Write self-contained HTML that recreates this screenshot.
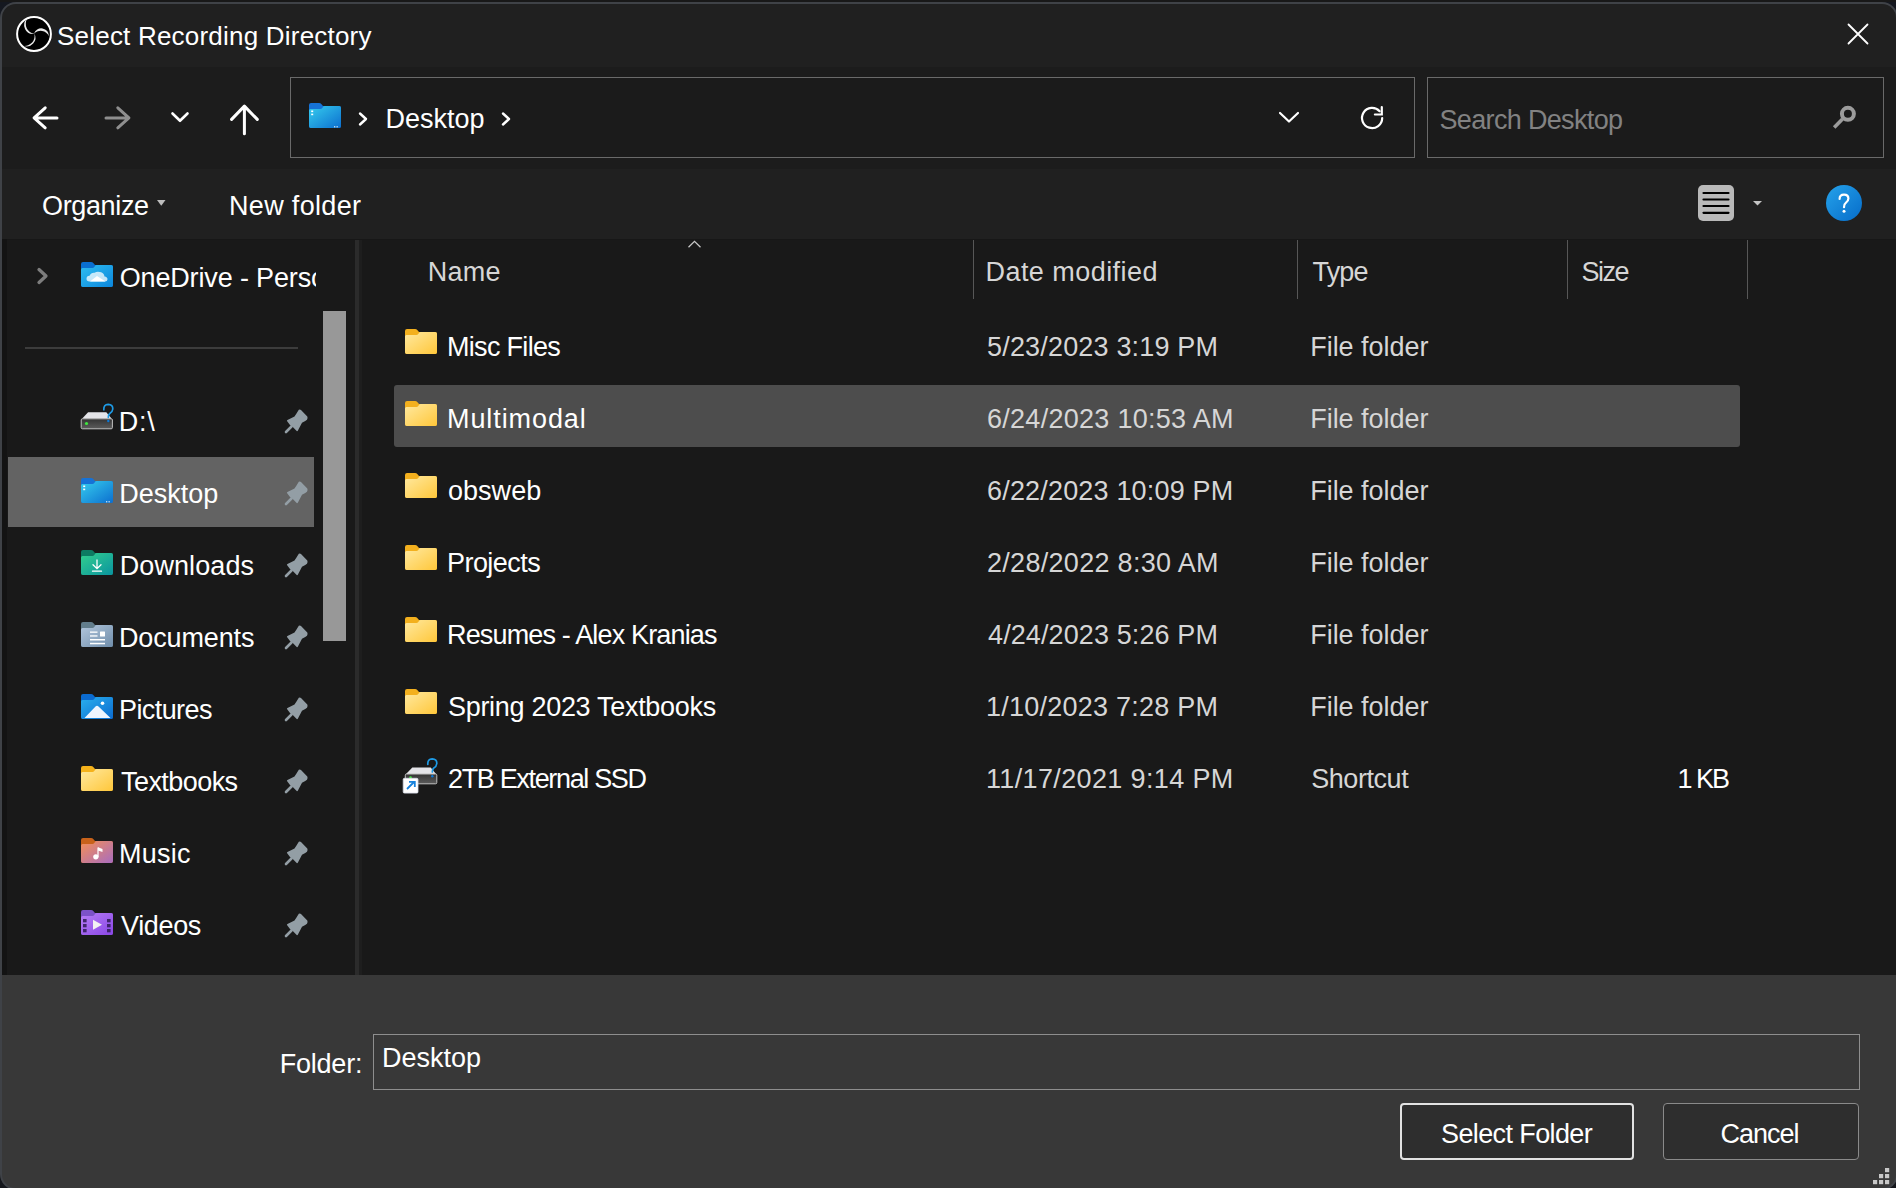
<!DOCTYPE html>
<html><head><meta charset="utf-8">
<style>
*{margin:0;padding:0;box-sizing:border-box}
html,body{width:1896px;height:1188px;overflow:hidden;background:#181818}
body{font-family:"Liberation Sans",sans-serif;position:relative}
.win{position:absolute;left:0;top:2px;width:1898px;height:1188px;border-radius:16px;background:#3f4247}
.clip{position:absolute;left:2px;top:4px;width:1894px;height:1184px;border-radius:14px;overflow:hidden}
.stage{position:absolute;left:-2px;top:-4px;width:1898px;height:1188px}
.abs{position:absolute}
.t{position:absolute;white-space:nowrap;line-height:1;font-family:"Liberation Sans",sans-serif}
svg{position:absolute;overflow:visible}
</style></head><body>
<div class="abs" style="left:0;top:2px;width:20px;height:20px;background:#151820"></div><div class="abs" style="left:1876px;top:2px;width:20px;height:20px;background:#151820"></div><div class="abs" style="left:0;top:1168px;width:20px;height:20px;background:#14161b"></div><div class="abs" style="left:1876px;top:1168px;width:20px;height:20px;background:#14161b"></div>
<div class="win"></div>
<div class="clip"><div class="stage">
<!-- title bar -->
<div class="abs" style="left:2px;top:4px;width:1896px;height:63px;background:#202020"></div>
<!-- nav bar -->
<div class="abs" style="left:2px;top:67px;width:1896px;height:102px;background:#1c1c1c"></div>
<!-- toolbar -->
<div class="abs" style="left:2px;top:169px;width:1896px;height:70px;background:#202020"></div>
<!-- content -->
<div class="abs" style="left:2px;top:239px;width:1896px;height:736px;background:#191919"></div>
<!-- footer -->
<div class="abs" style="left:2px;top:975px;width:1896px;height:220px;background:#383838"></div>

<!-- address box -->
<div class="abs" style="left:290px;top:77px;width:1125px;height:81px;border:1px solid #6a6a6a;background:#1b1b1b"></div>
<!-- search box -->
<div class="abs" style="left:1427px;top:77px;width:457px;height:81px;border:1px solid #6a6a6a;background:#1b1b1b"></div>

<div class="abs" style="left:2px;top:239px;width:5px;height:736px;background:#131313"></div>
<div class="abs" style="left:7px;top:239px;width:1887px;height:1px;background:#171717"></div>
<!-- left pane separator & splitter -->
<div class="abs" style="left:25px;top:347px;width:273px;height:2px;background:#3c3c3c"></div>
<div class="abs" style="left:323px;top:311px;width:23px;height:330px;background:#989898"></div>
<div class="abs" style="left:355px;top:240px;width:4px;height:735px;background:#2b2b2b"></div>
<div class="abs" style="left:359px;top:240px;width:3px;height:735px;background:#1e1e1e"></div>

<!-- nav selection -->
<div class="abs" style="left:8px;top:457px;width:306px;height:70px;background:#636363"></div>
<!-- list selection -->
<div class="abs" style="left:394px;top:385px;width:1346px;height:62px;background:#4d4d4d;border-radius:3px"></div>

<!-- column dividers -->
<div class="abs" style="left:973px;top:240px;width:1px;height:59px;background:#575757"></div>
<div class="abs" style="left:1297px;top:240px;width:1px;height:59px;background:#575757"></div>
<div class="abs" style="left:1567px;top:240px;width:1px;height:59px;background:#575757"></div>
<div class="abs" style="left:1747px;top:240px;width:1px;height:59px;background:#575757"></div>

<!-- footer input & buttons -->
<div class="abs" style="left:373px;top:1034px;width:1487px;height:56px;border:1px solid #8e8e8e;background:#383838"></div>
<div class="abs" style="left:1400px;top:1103px;width:234px;height:57px;border:2px solid #e2e2e2;border-radius:4px;background:#2e2e2e"></div>
<div class="abs" style="left:1663px;top:1103px;width:196px;height:57px;border:1px solid #8a8a8a;border-radius:4px;background:#2e2e2e"></div>

<svg style="left:16px;top:16px" width="36" height="36" viewBox="0 0 36 36"><circle cx="18" cy="18" r="17" fill="#000"/>
<g fill="#e8e8e8">
<path d="M11.3,2.6 A8.7,8.7 0 0 0 18.4,17.8 A10,10 0 0 1 11.3,2.6 Z"/>
<path d="M18,17.8 A7.6,7.6 0 0 1 32.9,20.2 A9,9 0 0 0 18,17.8 Z"/>
<path d="M18.3,17.4 A8.8,8.8 0 0 1 7.3,29.8 A10,10 0 0 0 18.3,17.4 Z"/>
</g>
<circle cx="18" cy="18" r="16.9" fill="none" stroke="#fff" stroke-width="2"/></svg>
<svg style="left:1846px;top:22px" width="24" height="24" viewBox="0 0 24 24"><path d="M2.5,2.5 L21.5,21.5 M21.5,2.5 L2.5,21.5" stroke="#fff" stroke-width="1.8" stroke-linecap="round"/></svg>
<svg style="left:26px;top:98px" width="40" height="40" viewBox="0 0 40 40"><path d="M19.2,9.8 L8.1,19.9 L19.2,29.8 M8.6,19.9 L31,19.9" fill="none" stroke="#fff" stroke-width="3" stroke-linecap="round" stroke-linejoin="round"/></svg>
<svg style="left:97px;top:98px" width="40" height="40" viewBox="0 0 40 40"><path d="M20.8,9.8 L31.9,19.9 L20.8,29.8 M31.4,19.9 L9,19.9" fill="none" stroke="#8e8e8e" stroke-width="3" stroke-linecap="round" stroke-linejoin="round"/></svg>
<svg style="left:166px;top:104px" width="28" height="28" viewBox="0 0 28 28"><path d="M6.5,9.5 L14,16.8 L21.5,9.5" fill="none" stroke="#fff" stroke-width="2.6" stroke-linecap="round" stroke-linejoin="round"/></svg>
<svg style="left:224px;top:98px" width="40" height="40" viewBox="0 0 40 40"><path d="M7.6,21.4 L20.4,8.1 L33.3,21.4 M20.4,9 L20.4,35.7" fill="none" stroke="#fff" stroke-width="3" stroke-linecap="round" stroke-linejoin="round"/></svg>
<svg style="left:309px;top:103px" width="32" height="25" viewBox="0 0 32 25"><defs><linearGradient id="gd1" x1="0" y1="0" x2="1" y2="1"><stop offset="0" stop-color="#36cdee"/><stop offset="1" stop-color="#0c6fcf"/></linearGradient></defs>
<path d="M2,0 H10 Q11.5,0 12.5,1.3 L14,3 H30 Q32,3 32,5 V23 Q32,25 30,25 H2 Q0,25 0,23 V2 Q0,0 2,0 Z" fill="#1672d6"/>
<path d="M0,7.5 Q0,6 1.5,6 H11.5 Q12.5,6 13.3,5 L14.5,3.3 Q15,3 15.8,3 H30 Q32,3 32,5 V23 Q32,25 30,25 H2 Q0,25 0,23 Z" fill="url(#gd1)"/><rect x="2.2" y="7.5" width="2" height="1.6" fill="#fff"/><rect x="2.2" y="10.6" width="2" height="1.6" fill="#fff"/><rect x="25" y="23.3" width="1.3" height="1" fill="#fff"/><rect x="27.5" y="23.3" width="1.3" height="1" fill="#fff"/></svg>
<svg style="left:355px;top:109px" width="16" height="20" viewBox="0 0 16 20"><path d="M5,4.5 L11,10 L5,15.5" fill="none" stroke="#fff" stroke-width="2.4" stroke-linecap="round" stroke-linejoin="round"/></svg>
<svg style="left:498px;top:109px" width="16" height="20" viewBox="0 0 16 20"><path d="M5,4.5 L11,10 L5,15.5" fill="none" stroke="#fff" stroke-width="2.4" stroke-linecap="round" stroke-linejoin="round"/></svg>
<svg style="left:1275px;top:106px" width="28" height="24" viewBox="0 0 28 24"><path d="M5,7 L14,15.5 L23,7" fill="none" stroke="#fff" stroke-width="2.2" stroke-linecap="round" stroke-linejoin="round"/></svg>
<svg style="left:1352px;top:98px" width="40" height="40" viewBox="0 0 40 40"><path d="M30.2,20 A10.1,10.1 0 1 1 27.6,13.2" fill="none" stroke="#fff" stroke-width="2.2" stroke-linecap="round"/><path d="M29.8,9 L29.8,16.5 L22.9,16.5" fill="none" stroke="#fff" stroke-width="2.2" stroke-linecap="round" stroke-linejoin="miter"/></svg>
<svg style="left:1824px;top:98px" width="40" height="40" viewBox="0 0 40 40"><circle cx="23.9" cy="15.8" r="6" fill="none" stroke="#9c9c9c" stroke-width="4"/><path d="M18.5,21 L10.2,29.5" stroke="#9c9c9c" stroke-width="3.6"/></svg>
<svg style="left:155px;top:198px" width="13" height="10" viewBox="0 0 13 10"><path d="M2,2 L10.5,2 L6.25,7.7 Z" fill="#bdbdbd"/></svg>
<svg style="left:1698px;top:185px" width="36" height="36" viewBox="0 0 36 36"><rect x="0" y="0" width="36" height="36" rx="5" fill="#b9b9b9"/><g stroke="#000" stroke-width="2.2" stroke-linecap="round"><path d="M5.5,8 H30.5 M5.5,14.5 H30.5 M5.5,21 H30.5 M5.5,27.8 H30.5"/></g></svg>
<svg style="left:1751px;top:199px" width="13" height="9" viewBox="0 0 13 9"><path d="M2,1.9 L11,1.9 L6.5,6.6 Z" fill="#c4c4c4"/></svg>
<svg style="left:1826px;top:185px" width="36" height="36" viewBox="0 0 36 36"><defs><linearGradient id="hg" x1="0" y1="0" x2="1" y2="1"><stop offset="0" stop-color="#25a2ea"/><stop offset="1" stop-color="#066cc9"/></linearGradient></defs><circle cx="18" cy="18" r="18" fill="url(#hg)"/><path d="M13.6,14 Q13.6,9.6 18,9.6 Q22.4,9.6 22.4,13.6 Q22.4,16.2 19.8,17.9 Q18,19.2 18,22.2" fill="none" stroke="#fff" stroke-width="2.2" stroke-linecap="round"/><circle cx="18" cy="26.3" r="1.5" fill="#fff"/></svg>
<svg style="left:33px;top:264px" width="20" height="24" viewBox="0 0 20 24"><path d="M6,5.5 L13,12 L6,18.5" fill="none" stroke="#7d7d7d" stroke-width="3.3" stroke-linecap="round" stroke-linejoin="round"/></svg>
<svg style="left:684px;top:238px" width="22" height="14" viewBox="0 0 22 14"><path d="M4.5,9.3 L10.5,3.3 L16.5,9.3" fill="none" stroke="#c8c8c8" stroke-width="1.3"/></svg>
<svg style="left:81px;top:262px" width="32" height="25" viewBox="0 0 32 25"><defs><linearGradient id="god" x1="0" y1="0" x2="1" y2="1"><stop offset="0" stop-color="#2fbdf0"/><stop offset="1" stop-color="#0b86dc"/></linearGradient></defs>
<path d="M2,0 H10 Q11.5,0 12.5,1.3 L14,3 H30 Q32,3 32,5 V23 Q32,25 30,25 H2 Q0,25 0,23 V2 Q0,0 2,0 Z" fill="#0a6fd1"/>
<path d="M0,7.5 Q0,6 1.5,6 H11.5 Q12.5,6 13.3,5 L14.5,3.3 Q15,3 15.8,3 H30 Q32,3 32,5 V23 Q32,25 30,25 H2 Q0,25 0,23 Z" fill="url(#god)"/><g fill="#fff"><path d="M8.5,19.5 Q5.5,19.5 5.5,16.8 Q5.5,14 8.5,13.8 Q10,10.5 13.5,10.8 Q16,9 19,10 Q23,10.5 23.5,14.5 Q26.5,15 26.5,17.3 Q26.5,19.5 24,19.5 Z" fill-opacity="0.75"/><path d="M9,19.5 L16,14 L24.5,19.5 Z"/></g></svg>
<svg style="left:76px;top:398px" width="40" height="40" viewBox="0 0 40 40"><defs><linearGradient id="dg1" x1="0" y1="0" x2="0" y2="1"><stop offset="0" stop-color="#333"/><stop offset="1" stop-color="#5c5c5c"/></linearGradient></defs>
<path d="M6,20.8 L12.1,14.3 L30.3,14.3 L35.7,20.8 Z" fill="#e4e4e8"/>
<rect x="5.2" y="20.8" width="31.2" height="10" rx="1.2" fill="url(#dg1)" stroke="#c0c0c0" stroke-width="1"/>
<circle cx="10.5" cy="25.5" r="1.6" fill="#3ee83e"/>
<path d="M27.8,11.8 Q27.5,6.5 32.2,6.3 Q37,6.5 36.8,11 Q36.5,14 33.8,15.5 Q32.3,16.5 32.3,19.3" fill="none" stroke="#1e9be6" stroke-width="1.7" stroke-linecap="round"/>
<circle cx="32.3" cy="23" r="1.2" fill="#0b78d8"/></svg>
<svg style="left:81px;top:478px" width="32" height="25" viewBox="0 0 32 25"><defs><linearGradient id="gd2" x1="0" y1="0" x2="1" y2="1"><stop offset="0" stop-color="#36cdee"/><stop offset="1" stop-color="#0c6fcf"/></linearGradient></defs>
<path d="M2,0 H10 Q11.5,0 12.5,1.3 L14,3 H30 Q32,3 32,5 V23 Q32,25 30,25 H2 Q0,25 0,23 V2 Q0,0 2,0 Z" fill="#1672d6"/>
<path d="M0,7.5 Q0,6 1.5,6 H11.5 Q12.5,6 13.3,5 L14.5,3.3 Q15,3 15.8,3 H30 Q32,3 32,5 V23 Q32,25 30,25 H2 Q0,25 0,23 Z" fill="url(#gd2)"/><rect x="2.2" y="7.5" width="2" height="1.6" fill="#fff"/><rect x="2.2" y="10.6" width="2" height="1.6" fill="#fff"/><rect x="25" y="23.3" width="1.3" height="1" fill="#fff"/><rect x="27.5" y="23.3" width="1.3" height="1" fill="#fff"/></svg>
<svg style="left:81px;top:550px" width="32" height="25" viewBox="0 0 32 25"><defs><linearGradient id="gdl" x1="0" y1="0" x2="1" y2="1"><stop offset="0" stop-color="#33cf8e"/><stop offset="1" stop-color="#0a949f"/></linearGradient></defs>
<path d="M2,0 H10 Q11.5,0 12.5,1.3 L14,3 H30 Q32,3 32,5 V23 Q32,25 30,25 H2 Q0,25 0,23 V2 Q0,0 2,0 Z" fill="#0d7a62"/>
<path d="M0,7.5 Q0,6 1.5,6 H11.5 Q12.5,6 13.3,5 L14.5,3.3 Q15,3 15.8,3 H30 Q32,3 32,5 V23 Q32,25 30,25 H2 Q0,25 0,23 Z" fill="url(#gdl)"/><path d="M16,10 V18.5 M12,14.8 L16,18.7 L20,14.8 M11.5,21.2 H20.5" fill="none" stroke="#fff" stroke-width="1.3" stroke-linecap="round"/></svg>
<svg style="left:81px;top:622px" width="32" height="25" viewBox="0 0 32 25"><defs><linearGradient id="gdo" x1="0" y1="0" x2="1" y2="1"><stop offset="0" stop-color="#b3c7dd"/><stop offset="1" stop-color="#6f8daa"/></linearGradient></defs>
<path d="M2,0 H10 Q11.5,0 12.5,1.3 L14,3 H30 Q32,3 32,5 V23 Q32,25 30,25 H2 Q0,25 0,23 V2 Q0,0 2,0 Z" fill="#627d8c"/>
<path d="M0,7.5 Q0,6 1.5,6 H11.5 Q12.5,6 13.3,5 L14.5,3.3 Q15,3 15.8,3 H30 Q32,3 32,5 V23 Q32,25 30,25 H2 Q0,25 0,23 Z" fill="url(#gdo)"/><g fill="#fff"><rect x="9" y="9.5" width="7.5" height="1.3"/><rect x="9" y="13.3" width="7.5" height="1.3"/><rect x="19" y="9.5" width="5" height="5" rx="0.5"/><rect x="9" y="17" width="15" height="1.5"/><rect x="9" y="20.8" width="15" height="1.5"/></g></svg>
<svg style="left:81px;top:694px" width="32" height="25" viewBox="0 0 32 25"><defs><linearGradient id="gpi" x1="0" y1="0" x2="1" y2="1"><stop offset="0" stop-color="#2ab0ee"/><stop offset="1" stop-color="#0b6bd0"/></linearGradient></defs>
<path d="M2,0 H10 Q11.5,0 12.5,1.3 L14,3 H30 Q32,3 32,5 V23 Q32,25 30,25 H2 Q0,25 0,23 V2 Q0,0 2,0 Z" fill="#0b6bd0"/>
<path d="M0,7.5 Q0,6 1.5,6 H11.5 Q12.5,6 13.3,5 L14.5,3.3 Q15,3 15.8,3 H30 Q32,3 32,5 V23 Q32,25 30,25 H2 Q0,25 0,23 Z" fill="url(#gpi)"/><g fill="#fff"><circle cx="21.5" cy="9.3" r="1.8"/><path d="M3.5,24 L14.5,12.5 Q16,11 17.5,12.5 L29.5,24 Z" fill="#eef5ff"/></g></svg>
<svg style="left:81px;top:766px" width="32" height="25" viewBox="0 0 32 25"><defs><linearGradient id="gtb" x1="0" y1="0" x2="1" y2="1"><stop offset="0" stop-color="#ffe9a0"/><stop offset="1" stop-color="#ffc73a"/></linearGradient></defs>
<path d="M2,0 H10 Q11.5,0 12.5,1.3 L14,3 H30 Q32,3 32,5 V23 Q32,25 30,25 H2 Q0,25 0,23 V2 Q0,0 2,0 Z" fill="#f5b21b"/>
<path d="M0,7.5 Q0,6 1.5,6 H11.5 Q12.5,6 13.3,5 L14.5,3.3 Q15,3 15.8,3 H30 Q32,3 32,5 V23 Q32,25 30,25 H2 Q0,25 0,23 Z" fill="url(#gtb)"/></svg>
<svg style="left:81px;top:838px" width="32" height="25" viewBox="0 0 32 25"><defs><linearGradient id="gmu" x1="0" y1="0" x2="1" y2="1"><stop offset="0" stop-color="#f59055"/><stop offset="1" stop-color="#a86cc0"/></linearGradient></defs>
<path d="M2,0 H10 Q11.5,0 12.5,1.3 L14,3 H30 Q32,3 32,5 V23 Q32,25 30,25 H2 Q0,25 0,23 V2 Q0,0 2,0 Z" fill="#c8621a"/>
<path d="M0,7.5 Q0,6 1.5,6 H11.5 Q12.5,6 13.3,5 L14.5,3.3 Q15,3 15.8,3 H30 Q32,3 32,5 V23 Q32,25 30,25 H2 Q0,25 0,23 Z" fill="url(#gmu)"/><g fill="#fff"><circle cx="14.8" cy="18.8" r="2.6"/><rect x="16.4" y="9.5" width="1.2" height="9.8"/><path d="M17,9.3 L21.5,11 L21.5,14 L17,12.5 Z"/></g></svg>
<svg style="left:81px;top:910px" width="32" height="25" viewBox="0 0 32 25"><defs><linearGradient id="gvi" x1="0" y1="0" x2="1" y2="1"><stop offset="0" stop-color="#b67ef5"/><stop offset="1" stop-color="#8a46e6"/></linearGradient></defs>
<path d="M2,0 H10 Q11.5,0 12.5,1.3 L14,3 H30 Q32,3 32,5 V23 Q32,25 30,25 H2 Q0,25 0,23 V2 Q0,0 2,0 Z" fill="#7c52c8"/>
<path d="M0,7.5 Q0,6 1.5,6 H11.5 Q12.5,6 13.3,5 L14.5,3.3 Q15,3 15.8,3 H30 Q32,3 32,5 V23 Q32,25 30,25 H2 Q0,25 0,23 Z" fill="url(#gvi)"/><g fill="#2e1a55" fill-opacity="0.85"><rect x="2" y="9" width="3.6" height="3.3"/><rect x="2" y="14" width="3.6" height="3.3"/><rect x="2" y="19" width="3.6" height="3.3"/><rect x="26" y="9" width="3.6" height="3.3"/><rect x="26" y="14" width="3.6" height="3.3"/><rect x="26" y="19" width="3.6" height="3.3"/></g><path d="M12,9.8 L21,14.8 L12,19.8 Z" fill="#f2f2f2"/></svg>
<svg style="left:278px;top:404.5px" width="36" height="36" viewBox="0 0 36 36"><path d="M20.8,4.8 Q22,4.2 23,5 L29.3,11.4 Q30,12.5 29,14.8 Q28,16 24,17.8 L19.8,25.8 Q19.3,26.5 18.7,26 L15,22.3 L12.2,20.3 L9,16 Q8.6,15.3 9.5,15 Q14,12.5 16.5,11.5 Q18,9.5 20.8,4.8 Z" fill="#939ea5"/><path d="M13.5,21.5 L8,27" stroke="#939ea5" stroke-width="2.6" stroke-linecap="round"/></svg>
<svg style="left:278px;top:476.5px" width="36" height="36" viewBox="0 0 36 36"><path d="M20.8,4.8 Q22,4.2 23,5 L29.3,11.4 Q30,12.5 29,14.8 Q28,16 24,17.8 L19.8,25.8 Q19.3,26.5 18.7,26 L15,22.3 L12.2,20.3 L9,16 Q8.6,15.3 9.5,15 Q14,12.5 16.5,11.5 Q18,9.5 20.8,4.8 Z" fill="#939ea5"/><path d="M13.5,21.5 L8,27" stroke="#939ea5" stroke-width="2.6" stroke-linecap="round"/></svg>
<svg style="left:278px;top:548.5px" width="36" height="36" viewBox="0 0 36 36"><path d="M20.8,4.8 Q22,4.2 23,5 L29.3,11.4 Q30,12.5 29,14.8 Q28,16 24,17.8 L19.8,25.8 Q19.3,26.5 18.7,26 L15,22.3 L12.2,20.3 L9,16 Q8.6,15.3 9.5,15 Q14,12.5 16.5,11.5 Q18,9.5 20.8,4.8 Z" fill="#939ea5"/><path d="M13.5,21.5 L8,27" stroke="#939ea5" stroke-width="2.6" stroke-linecap="round"/></svg>
<svg style="left:278px;top:620.5px" width="36" height="36" viewBox="0 0 36 36"><path d="M20.8,4.8 Q22,4.2 23,5 L29.3,11.4 Q30,12.5 29,14.8 Q28,16 24,17.8 L19.8,25.8 Q19.3,26.5 18.7,26 L15,22.3 L12.2,20.3 L9,16 Q8.6,15.3 9.5,15 Q14,12.5 16.5,11.5 Q18,9.5 20.8,4.8 Z" fill="#939ea5"/><path d="M13.5,21.5 L8,27" stroke="#939ea5" stroke-width="2.6" stroke-linecap="round"/></svg>
<svg style="left:278px;top:692.5px" width="36" height="36" viewBox="0 0 36 36"><path d="M20.8,4.8 Q22,4.2 23,5 L29.3,11.4 Q30,12.5 29,14.8 Q28,16 24,17.8 L19.8,25.8 Q19.3,26.5 18.7,26 L15,22.3 L12.2,20.3 L9,16 Q8.6,15.3 9.5,15 Q14,12.5 16.5,11.5 Q18,9.5 20.8,4.8 Z" fill="#939ea5"/><path d="M13.5,21.5 L8,27" stroke="#939ea5" stroke-width="2.6" stroke-linecap="round"/></svg>
<svg style="left:278px;top:764.5px" width="36" height="36" viewBox="0 0 36 36"><path d="M20.8,4.8 Q22,4.2 23,5 L29.3,11.4 Q30,12.5 29,14.8 Q28,16 24,17.8 L19.8,25.8 Q19.3,26.5 18.7,26 L15,22.3 L12.2,20.3 L9,16 Q8.6,15.3 9.5,15 Q14,12.5 16.5,11.5 Q18,9.5 20.8,4.8 Z" fill="#939ea5"/><path d="M13.5,21.5 L8,27" stroke="#939ea5" stroke-width="2.6" stroke-linecap="round"/></svg>
<svg style="left:278px;top:836.5px" width="36" height="36" viewBox="0 0 36 36"><path d="M20.8,4.8 Q22,4.2 23,5 L29.3,11.4 Q30,12.5 29,14.8 Q28,16 24,17.8 L19.8,25.8 Q19.3,26.5 18.7,26 L15,22.3 L12.2,20.3 L9,16 Q8.6,15.3 9.5,15 Q14,12.5 16.5,11.5 Q18,9.5 20.8,4.8 Z" fill="#939ea5"/><path d="M13.5,21.5 L8,27" stroke="#939ea5" stroke-width="2.6" stroke-linecap="round"/></svg>
<svg style="left:278px;top:908.5px" width="36" height="36" viewBox="0 0 36 36"><path d="M20.8,4.8 Q22,4.2 23,5 L29.3,11.4 Q30,12.5 29,14.8 Q28,16 24,17.8 L19.8,25.8 Q19.3,26.5 18.7,26 L15,22.3 L12.2,20.3 L9,16 Q8.6,15.3 9.5,15 Q14,12.5 16.5,11.5 Q18,9.5 20.8,4.8 Z" fill="#939ea5"/><path d="M13.5,21.5 L8,27" stroke="#939ea5" stroke-width="2.6" stroke-linecap="round"/></svg>
<svg style="left:405px;top:329px" width="32" height="25" viewBox="0 0 32 25"><defs><linearGradient id="gl0" x1="0" y1="0" x2="1" y2="1"><stop offset="0" stop-color="#ffe9a0"/><stop offset="1" stop-color="#ffc73a"/></linearGradient></defs>
<path d="M2,0 H10 Q11.5,0 12.5,1.3 L14,3 H30 Q32,3 32,5 V23 Q32,25 30,25 H2 Q0,25 0,23 V2 Q0,0 2,0 Z" fill="#f3b01e"/>
<path d="M0,7.5 Q0,6 1.5,6 H11.5 Q12.5,6 13.3,5 L14.5,3.3 Q15,3 15.8,3 H30 Q32,3 32,5 V23 Q32,25 30,25 H2 Q0,25 0,23 Z" fill="url(#gl0)"/></svg>
<svg style="left:405px;top:401px" width="32" height="25" viewBox="0 0 32 25"><defs><linearGradient id="gl1" x1="0" y1="0" x2="1" y2="1"><stop offset="0" stop-color="#ffe9a0"/><stop offset="1" stop-color="#ffc73a"/></linearGradient></defs>
<path d="M2,0 H10 Q11.5,0 12.5,1.3 L14,3 H30 Q32,3 32,5 V23 Q32,25 30,25 H2 Q0,25 0,23 V2 Q0,0 2,0 Z" fill="#f3b01e"/>
<path d="M0,7.5 Q0,6 1.5,6 H11.5 Q12.5,6 13.3,5 L14.5,3.3 Q15,3 15.8,3 H30 Q32,3 32,5 V23 Q32,25 30,25 H2 Q0,25 0,23 Z" fill="url(#gl1)"/></svg>
<svg style="left:405px;top:473px" width="32" height="25" viewBox="0 0 32 25"><defs><linearGradient id="gl2" x1="0" y1="0" x2="1" y2="1"><stop offset="0" stop-color="#ffe9a0"/><stop offset="1" stop-color="#ffc73a"/></linearGradient></defs>
<path d="M2,0 H10 Q11.5,0 12.5,1.3 L14,3 H30 Q32,3 32,5 V23 Q32,25 30,25 H2 Q0,25 0,23 V2 Q0,0 2,0 Z" fill="#f3b01e"/>
<path d="M0,7.5 Q0,6 1.5,6 H11.5 Q12.5,6 13.3,5 L14.5,3.3 Q15,3 15.8,3 H30 Q32,3 32,5 V23 Q32,25 30,25 H2 Q0,25 0,23 Z" fill="url(#gl2)"/></svg>
<svg style="left:405px;top:545px" width="32" height="25" viewBox="0 0 32 25"><defs><linearGradient id="gl3" x1="0" y1="0" x2="1" y2="1"><stop offset="0" stop-color="#ffe9a0"/><stop offset="1" stop-color="#ffc73a"/></linearGradient></defs>
<path d="M2,0 H10 Q11.5,0 12.5,1.3 L14,3 H30 Q32,3 32,5 V23 Q32,25 30,25 H2 Q0,25 0,23 V2 Q0,0 2,0 Z" fill="#f3b01e"/>
<path d="M0,7.5 Q0,6 1.5,6 H11.5 Q12.5,6 13.3,5 L14.5,3.3 Q15,3 15.8,3 H30 Q32,3 32,5 V23 Q32,25 30,25 H2 Q0,25 0,23 Z" fill="url(#gl3)"/></svg>
<svg style="left:405px;top:617px" width="32" height="25" viewBox="0 0 32 25"><defs><linearGradient id="gl4" x1="0" y1="0" x2="1" y2="1"><stop offset="0" stop-color="#ffe9a0"/><stop offset="1" stop-color="#ffc73a"/></linearGradient></defs>
<path d="M2,0 H10 Q11.5,0 12.5,1.3 L14,3 H30 Q32,3 32,5 V23 Q32,25 30,25 H2 Q0,25 0,23 V2 Q0,0 2,0 Z" fill="#f3b01e"/>
<path d="M0,7.5 Q0,6 1.5,6 H11.5 Q12.5,6 13.3,5 L14.5,3.3 Q15,3 15.8,3 H30 Q32,3 32,5 V23 Q32,25 30,25 H2 Q0,25 0,23 Z" fill="url(#gl4)"/></svg>
<svg style="left:405px;top:689px" width="32" height="25" viewBox="0 0 32 25"><defs><linearGradient id="gl5" x1="0" y1="0" x2="1" y2="1"><stop offset="0" stop-color="#ffe9a0"/><stop offset="1" stop-color="#ffc73a"/></linearGradient></defs>
<path d="M2,0 H10 Q11.5,0 12.5,1.3 L14,3 H30 Q32,3 32,5 V23 Q32,25 30,25 H2 Q0,25 0,23 V2 Q0,0 2,0 Z" fill="#f3b01e"/>
<path d="M0,7.5 Q0,6 1.5,6 H11.5 Q12.5,6 13.3,5 L14.5,3.3 Q15,3 15.8,3 H30 Q32,3 32,5 V23 Q32,25 30,25 H2 Q0,25 0,23 Z" fill="url(#gl5)"/></svg>
<svg style="left:396px;top:752px" width="48" height="48" viewBox="0 0 48 48"><defs><linearGradient id="sg" x1="0" y1="0" x2="0" y2="1"><stop offset="0" stop-color="#333"/><stop offset="1" stop-color="#5c5c5c"/></linearGradient></defs>
<path d="M10,22 L16.3,15.5 L34.7,15.5 L40,22 Z" fill="#e4e4e8"/>
<rect x="9.3" y="22" width="31.5" height="9.8" rx="1.2" fill="url(#sg)" stroke="#c0c0c0" stroke-width="1"/>
<circle cx="14.5" cy="25.5" r="1.3" fill="#3ee83e"/>
<path d="M31.8,12.5 Q31.5,7 36.2,6.8 Q41,7 40.8,11.5 Q40.5,14.5 37.8,16 Q36.3,17 36.3,20" fill="none" stroke="#1e9be6" stroke-width="1.7" stroke-linecap="round"/>
<circle cx="36.3" cy="24.2" r="1.2" fill="#0b78d8"/>
<rect x="7.2" y="26.3" width="14.8" height="14.8" rx="1.2" fill="#fff" stroke="#d5dbe6" stroke-width="0.8"/>
<path d="M11,37 L18,30 M13,29.8 H18.8 V35" fill="none" stroke="#1782dc" stroke-width="1.8"/></svg>
<svg style="left:1873px;top:1168px" width="18" height="18" viewBox="0 0 18 18"><rect x="12" y="0" width="4.2" height="4.2" fill="#c8c8c8"/><rect x="6" y="6" width="4.2" height="4.2" fill="#c8c8c8"/><rect x="12" y="6" width="4.2" height="4.2" fill="#c8c8c8"/><rect x="0" y="12" width="4.2" height="4.2" fill="#c8c8c8"/><rect x="6" y="12" width="4.2" height="4.2" fill="#c8c8c8"/><rect x="12" y="12" width="4.2" height="4.2" fill="#c8c8c8"/></svg>
<span class="t" style="left:57.0px;top:23.0px;font-size:26px;letter-spacing:0.21px;color:#ffffff">Select Recording Directory</span>
<span class="t" style="left:385.5px;top:106.4px;font-size:27px;letter-spacing:-0.01px;color:#ffffff">Desktop</span>
<span class="t" style="left:1439.5px;top:107.3px;font-size:27px;letter-spacing:-0.66px;color:#828282">Search Desktop</span>
<span class="t" style="left:42.0px;top:193.1px;font-size:27px;letter-spacing:-0.36px;color:#ffffff">Organize</span>
<span class="t" style="left:229.0px;top:193.1px;font-size:27px;letter-spacing:0.33px;color:#ffffff">New folder</span>
<div class="abs" style="left:0;top:0;width:316px;height:320px;overflow:hidden"><span class="t" style="left:119.7px;top:265.1px;font-size:27px;letter-spacing:-0.15px;color:#ffffff">OneDrive - Personal</span></div>
<span class="t" style="left:118.7px;top:409.1px;font-size:27px;letter-spacing:0.80px;color:#ffffff">D:\</span>
<span class="t" style="left:119.2px;top:481.1px;font-size:27px;letter-spacing:-0.01px;color:#ffffff">Desktop</span>
<span class="t" style="left:119.7px;top:553.1px;font-size:27px;letter-spacing:0.09px;color:#ffffff">Downloads</span>
<span class="t" style="left:119.0px;top:625.1px;font-size:27px;letter-spacing:-0.14px;color:#ffffff">Documents</span>
<span class="t" style="left:119.0px;top:697.1px;font-size:27px;letter-spacing:-0.58px;color:#ffffff">Pictures</span>
<span class="t" style="left:121.0px;top:769.1px;font-size:27px;letter-spacing:-0.56px;color:#ffffff">Textbooks</span>
<span class="t" style="left:119.0px;top:841.1px;font-size:27px;letter-spacing:0.25px;color:#ffffff">Music</span>
<span class="t" style="left:121.0px;top:913.1px;font-size:27px;letter-spacing:-0.35px;color:#ffffff">Videos</span>
<span class="t" style="left:427.8px;top:258.8px;font-size:27px;letter-spacing:0.20px;color:#d6d6d6">Name</span>
<span class="t" style="left:985.5px;top:258.8px;font-size:27px;letter-spacing:0.45px;color:#d6d6d6">Date modified</span>
<span class="t" style="left:1312.5px;top:258.8px;font-size:27px;letter-spacing:-0.84px;color:#d6d6d6">Type</span>
<span class="t" style="left:1581.5px;top:258.8px;font-size:27px;letter-spacing:-1.50px;color:#d6d6d6">Size</span>
<span class="t" style="left:279.7px;top:1051.4px;font-size:27px;letter-spacing:-0.21px;color:#ffffff">Folder:</span>
<span class="t" style="left:382.0px;top:1045.1px;font-size:27px;letter-spacing:-0.01px;color:#ffffff">Desktop</span>
<span class="t" style="left:1441.0px;top:1121.1px;font-size:27px;letter-spacing:-0.61px;color:#ffffff">Select Folder</span>
<span class="t" style="left:1720.6px;top:1121.1px;font-size:27px;letter-spacing:-1.01px;color:#ffffff">Cancel</span>
<span class="t" style="left:1677.5px;top:766.1px;font-size:27px;letter-spacing:-1.98px;color:#ffffff">1 KB</span>
<span class="t" style="left:447.0px;top:334.1px;font-size:27px;letter-spacing:-0.69px;color:#ffffff">Misc Files</span>
<span class="t" style="left:987.0px;top:334.1px;font-size:27px;letter-spacing:0.18px;color:#d6d6d6">5/23/2023 3:19 PM</span>
<span class="t" style="left:1310.2px;top:334.1px;font-size:27px;letter-spacing:-0.02px;color:#d6d6d6">File folder</span>
<span class="t" style="left:447.0px;top:406.1px;font-size:27px;letter-spacing:0.91px;color:#ffffff">Multimodal</span>
<span class="t" style="left:987.0px;top:406.1px;font-size:27px;letter-spacing:0.28px;color:#d6d6d6">6/24/2023 10:53 AM</span>
<span class="t" style="left:1310.2px;top:406.1px;font-size:27px;letter-spacing:-0.02px;color:#d6d6d6">File folder</span>
<span class="t" style="left:448.0px;top:478.1px;font-size:27px;letter-spacing:0.03px;color:#ffffff">obsweb</span>
<span class="t" style="left:987.0px;top:478.1px;font-size:27px;letter-spacing:0.18px;color:#d6d6d6">6/22/2023 10:09 PM</span>
<span class="t" style="left:1310.2px;top:478.1px;font-size:27px;letter-spacing:-0.02px;color:#d6d6d6">File folder</span>
<span class="t" style="left:447.0px;top:550.1px;font-size:27px;letter-spacing:-0.55px;color:#ffffff">Projects</span>
<span class="t" style="left:987.0px;top:550.1px;font-size:27px;letter-spacing:0.30px;color:#d6d6d6">2/28/2022 8:30 AM</span>
<span class="t" style="left:1310.2px;top:550.1px;font-size:27px;letter-spacing:-0.02px;color:#d6d6d6">File folder</span>
<span class="t" style="left:447.0px;top:622.1px;font-size:27px;letter-spacing:-0.84px;color:#ffffff">Resumes - Alex Kranias</span>
<span class="t" style="left:988.0px;top:622.1px;font-size:27px;letter-spacing:0.11px;color:#d6d6d6">4/24/2023 5:26 PM</span>
<span class="t" style="left:1310.2px;top:622.1px;font-size:27px;letter-spacing:-0.02px;color:#d6d6d6">File folder</span>
<span class="t" style="left:448.0px;top:694.1px;font-size:27px;letter-spacing:-0.30px;color:#ffffff">Spring 2023 Textbooks</span>
<span class="t" style="left:986.0px;top:694.1px;font-size:27px;letter-spacing:0.24px;color:#d6d6d6">1/10/2023 7:28 PM</span>
<span class="t" style="left:1310.2px;top:694.1px;font-size:27px;letter-spacing:-0.02px;color:#d6d6d6">File folder</span>
<span class="t" style="left:448.0px;top:766.1px;font-size:27px;letter-spacing:-1.34px;color:#ffffff">2TB External SSD</span>
<span class="t" style="left:986.0px;top:766.1px;font-size:27px;letter-spacing:0.36px;color:#d6d6d6">11/17/2021 9:14 PM</span>
<span class="t" style="left:1311.2px;top:766.1px;font-size:27px;letter-spacing:-0.44px;color:#d6d6d6">Shortcut</span>
</div></div>
</body></html>
